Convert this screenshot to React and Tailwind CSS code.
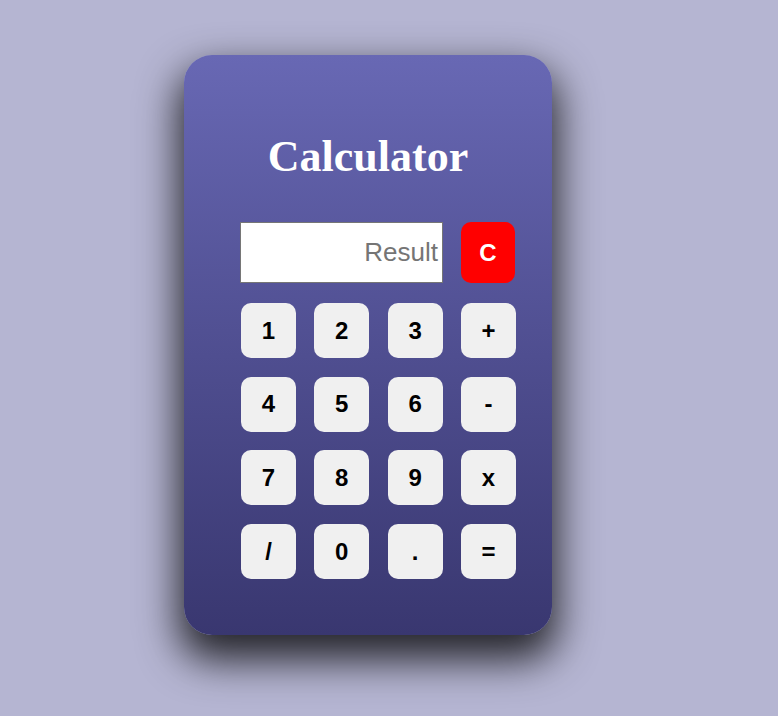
export default function App() {
  const rows = [
    ["1", "2", "3", "+"],
    ["4", "5", "6", "-"],
    ["7", "8", "9", "x"],
    ["/", "0", ".", "="],
  ];
  return (
    <div className="w-[778px] h-[716px] bg-[#b5b5d2] pt-[55px] pl-[184px] overflow-hidden">
      <div className="w-[368px] h-[580px] rounded-[28px] bg-gradient-to-b from-[#6868b4] to-[#393770] shadow-[0_20px_40px_5px_rgba(0,0,0,0.8)] flex flex-col">
        <h1 className="mt-[76px] text-center text-white font-bold text-[44px] leading-[52px] font-['Liberation_Serif',serif]">
          Calculator
        </h1>
        <div className="mt-[39px] ml-[56px] flex flex-col font-['Liberation_Sans',Arial,sans-serif]">
          <div className="flex items-center">
            <div className="w-[203px] h-[61px] bg-white border border-[#767676] flex items-center justify-end pr-[4px] text-[26px] text-[#757575]">
              Result
            </div>
            <div className="ml-[18px] w-[54px] h-[61px] rounded-[10px] bg-[#ff0000] text-white font-bold text-[24px] flex items-center justify-center">
              C
            </div>
          </div>
          <div className="mt-[20px] ml-[1px] grid grid-cols-[repeat(4,55px)] gap-x-[18.3px] gap-y-[18.7px]">
            {rows.flat().map((k) => (
              <div
                key={k}
                className="w-[55px] h-[55px] rounded-[10px] bg-[#f0f0f0] text-black font-bold text-[24px] flex items-center justify-center"
              >
                {k}
              </div>
            ))}
          </div>
        </div>
      </div>
    </div>
  );
}
